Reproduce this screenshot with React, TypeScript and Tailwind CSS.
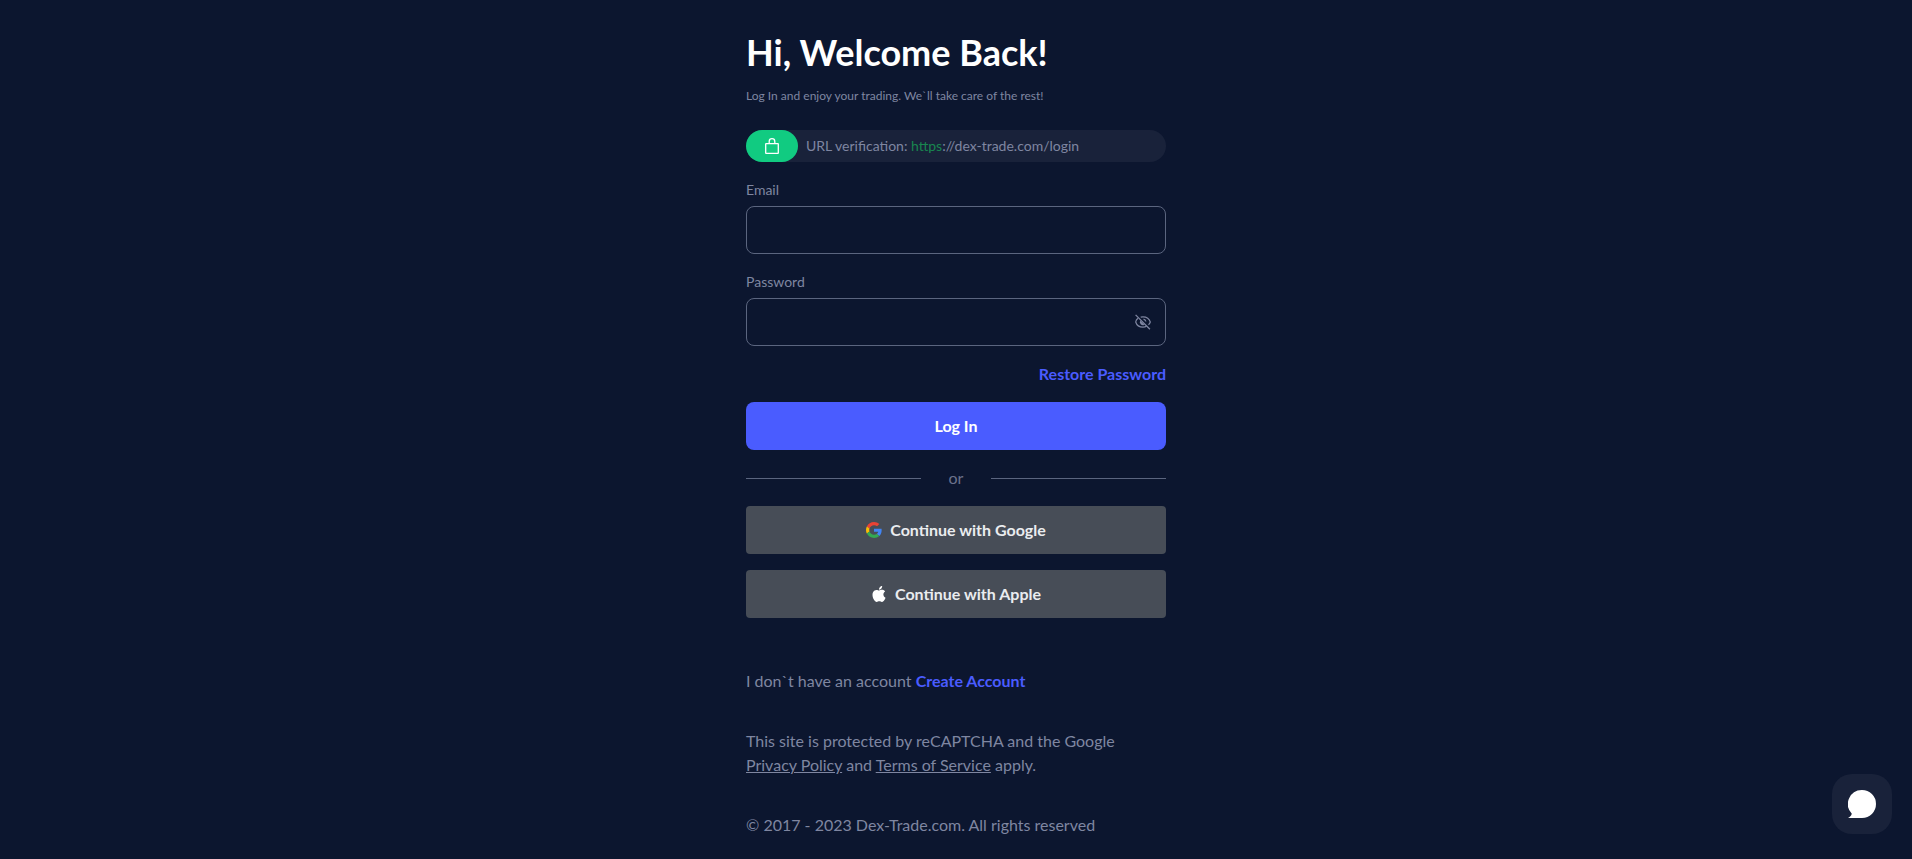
import { useState } from "react";

function LockIcon() {
  return (
    <svg className="h-4 w-4" viewBox="0 0 16 16" fill="none" stroke="#fff" strokeWidth="1.3" strokeLinejoin="round" aria-hidden="true">
      <rect x="1.7" y="5.7" width="12.6" height="9.6" rx="0.4" />
      <path d="M5.2 5.5V3.4A2.8 2.8 0 0 1 8 0.7a2.8 2.8 0 0 1 2.8 2.7v2.1" />
    </svg>
  );
}

function EyeOffIcon() {
  return (
    <svg className="h-4 w-4" viewBox="0 0 16 16" fill="none" stroke="#7f86a1" strokeWidth="1.2" aria-hidden="true">
      <path d="M3 4.3C1.600 5.400 .9 6.800 .7 8c.9 3 3.900 5.200 7.300 5.200 1.300 0 2.500-.3 3.600-.9M5.700 3.200c.7-.2 1.500-.4 2.300-.4 3.500 0 6.400 2.200 7.300 5.200-.3 1.100-.9 2-1.800 2.900" />
      <path d="M5.300 6.600a3 3 0 0 0 4.200 4.100z" fill="#7f86a1" stroke="none" />
      <path d="M8.500 5.100A3 3 0 0 1 10.900 7.500" />
      <path d="M.6.900 14.900 15.200" strokeWidth="1.300" />
    </svg>
  );
}

function GoogleIcon() {
  return (
    <svg className="h-4 w-4" viewBox="0 0 48 48" aria-hidden="true">
      <path fill="#EA4335" d="M24 9.500c3.540 0 6.710 1.220 9.210 3.600l6.850-6.850C35.900 2.380 30.470 0 24 0 14.620 0 6.510 5.380 2.560 13.220l7.980 6.190C12.430 13.720 17.740 9.500 24 9.500z" />
      <path fill="#4285F4" d="M46.980 24.550c0-1.570-.15-3.090-.38-4.550H24v9.020h12.940c-.58 2.960-2.260 5.480-4.780 7.180l7.730 6c4.510-4.180 7.090-10.360 7.090-17.650z" />
      <path fill="#FBBC05" d="M10.530 28.590c-.48-1.450-.76-2.990-.76-4.590s.27-3.140.76-4.590l-7.980-6.190C.92 16.460 0 20.120 0 24c0 3.880.92 7.540 2.560 10.780l7.970-6.190z" />
      <path fill="#34A853" d="M24 48c6.480 0 11.930-2.130 15.890-5.810l-7.730-6c-2.150 1.450-4.920 2.300-8.160 2.300-6.260 0-11.570-4.220-13.470-9.910l-7.980 6.190C6.510 42.620 14.620 48 24 48z" />
    </svg>
  );
}

function AppleIcon() {
  return (
    <svg className="h-4 w-4" viewBox="0 0 24 24" fill="#fff" aria-hidden="true">
      <path d="M12.152 6.896c-.948 0-2.415-1.078-3.960-1.040-2.040.027-3.910 1.183-4.961 3.014-2.117 3.675-.546 9.103 1.519 12.090 1.013 1.454 2.208 3.090 3.792 3.039 1.520-.065 2.090-.987 3.935-.987 1.831 0 2.350.987 3.960.948 1.637-.026 2.676-1.480 3.676-2.948 1.156-1.688 1.636-3.325 1.662-3.415-.039-.013-3.182-1.221-3.220-4.857-.026-3.040 2.480-4.494 2.597-4.559-1.429-2.090-3.623-2.324-4.390-2.376-2-.156-3.675 1.090-4.610 1.090zM15.530 3.830c.843-1.012 1.400-2.427 1.245-3.830-1.207.052-2.662.805-3.532 1.818-.780.896-1.454 2.338-1.273 3.714 1.338.104 2.715-.688 3.559-1.701" />
    </svg>
  );
}

function ChatIcon() {
  return (
    <svg className="h-7 w-7" viewBox="0 0 28 28" fill="#fff" aria-hidden="true">
      <path d="M14 0a14 14 0 0 1 0 28H0c1.800-1 3.200-2.200 3.800-4.300A14 14 0 0 1 14 0z" />
    </svg>
  );
}

const fieldClass =
  "h-12 w-full rounded-lg border border-[#5b657f] bg-transparent px-4 text-base text-white outline-none focus:border-[#4a5cff]";
const socialClass =
  "flex h-12 w-full cursor-pointer items-center justify-center gap-2 rounded bg-[#474d57] font-bold text-[#eaecef]";

export default function App() {
  const [visible, setVisible] = useState(false);

  return (
    <div className="min-h-screen bg-[#0c162f] px-4 pt-8 font-['Lato',sans-serif] text-base leading-6 text-[#7f86a1]">
      <main className="mx-auto w-full max-w-[420px]">
        <h1 className="text-4xl leading-10 font-bold text-white">Hi, Welcome Back!</h1>
        <p className="mt-4 text-xs leading-4">Log In and enjoy your trading. We`ll take care of the rest!</p>

        <div className="mt-[26px] flex h-8 items-center gap-2 rounded-full bg-[#19223a]">
          <span className="flex h-8 w-[52px] items-center justify-center rounded-full bg-[#11cb81]">
            <LockIcon />
          </span>
          <span className="text-sm">
            URL verification: <span className="text-[#18864f]">https</span>://dex-trade.com/login
          </span>
        </div>

        <form onSubmit={(e) => e.preventDefault()}>
          <label htmlFor="email" className="mt-4 mb-1 block text-sm leading-6">
            Email
          </label>
          <input id="email" type="email" className={fieldClass} />

          <label htmlFor="password" className="mt-4 mb-1 block text-sm leading-6">
            Password
          </label>
          <div className="relative">
            <input id="password" type={visible ? "text" : "password"} className={fieldClass} />
            <button
              type="button"
              aria-label="Toggle password visibility"
              onClick={() => setVisible(!visible)}
              className="absolute inset-y-0 right-[15px] cursor-pointer"
            >
              <EyeOffIcon />
            </button>
          </div>

          <div className="mt-4 text-right">
            <a href="#restore" className="font-bold text-[#4a5cff]">
              Restore Password
            </a>
          </div>
          <button type="submit" className="mt-4 h-12 w-full cursor-pointer rounded-lg bg-[#4a5cff] font-bold text-white">
            Log In
          </button>
        </form>

        <div className="my-4 flex h-6 items-center">
          <span className="h-px flex-1 bg-[#5b657f]" />
          <span className="w-[70px] text-center text-[#6b728c]">or</span>
          <span className="h-px flex-1 bg-[#5b657f]" />
        </div>

        <div className="flex flex-col gap-4">
          <button type="button" className={socialClass}>
            <GoogleIcon />
            Continue with Google
          </button>
          <button type="button" className={socialClass}>
            <AppleIcon />
            Continue with Apple
          </button>
        </div>

        <p className="mt-[51px]">
          I don`t have an account{" "}
          <a href="#signup" className="font-bold text-[#4a5cff]">
            Create Account
          </a>
        </p>
        <p className="mt-9">
          This site is protected by reCAPTCHA and the Google{" "}
          <a href="#privacy" className="underline">
            Privacy Policy
          </a>{" "}
          and{" "}
          <a href="#terms" className="underline">
            Terms of Service
          </a>{" "}
          apply.
        </p>
        <p className="mt-9">© 2017 - 2023 Dex-Trade.com. All rights reserved</p>
      </main>

      <button
        type="button"
        aria-label="Open chat"
        className="fixed right-5 bottom-[25px] flex h-15 w-15 cursor-pointer items-center justify-center rounded-[20px] bg-[#19223a]"
      >
        <ChatIcon />
      </button>
    </div>
  );
}
